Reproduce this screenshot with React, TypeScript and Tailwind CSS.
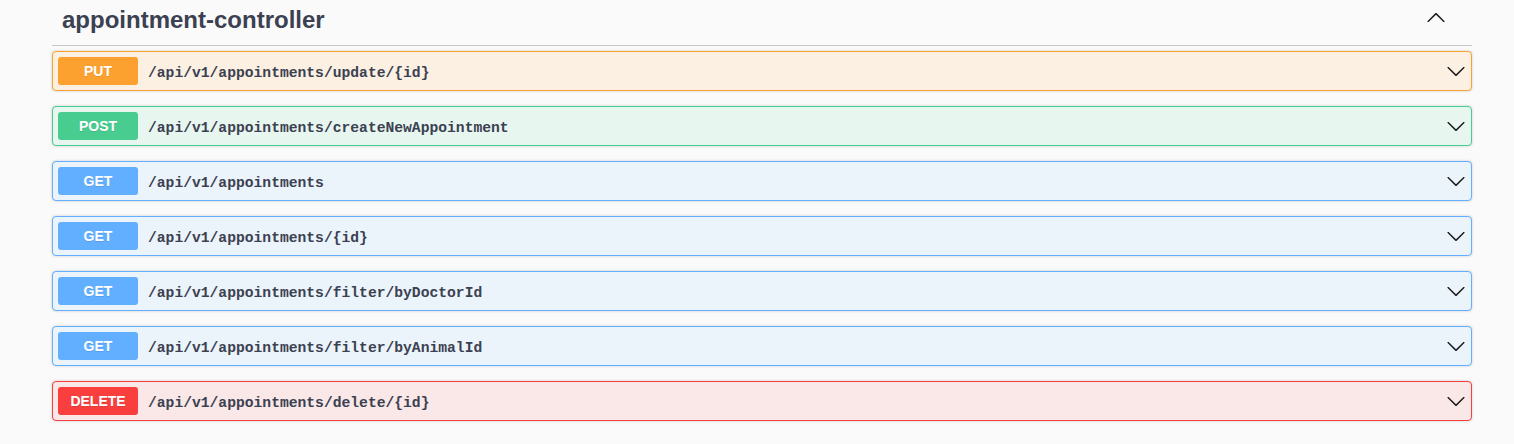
const methodStyles: Record<string, { row: string; badge: string }> = {
  PUT: { row: "bg-[#fcf0e3] border-[#fca130]", badge: "bg-[#fca130]" },
  POST: { row: "bg-[#e8f6f0] border-[#49cc90]", badge: "bg-[#49cc90]" },
  GET: { row: "bg-[#ebf3fb] border-[#61affe]", badge: "bg-[#61affe]" },
  DELETE: { row: "bg-[#fae7e7] border-[#f93e3e]", badge: "bg-[#f93e3e]" },
};

const endpoints = [
  { method: "PUT", path: "/api/v1/appointments/update/{id}" },
  { method: "POST", path: "/api/v1/appointments/createNewAppointment" },
  { method: "GET", path: "/api/v1/appointments" },
  { method: "GET", path: "/api/v1/appointments/{id}" },
  { method: "GET", path: "/api/v1/appointments/filter/byDoctorId" },
  { method: "GET", path: "/api/v1/appointments/filter/byAnimalId" },
  { method: "DELETE", path: "/api/v1/appointments/delete/{id}" },
];

function Chevron({ up = false }: { up?: boolean }) {
  return (
    <svg
      width="20"
      height="20"
      viewBox="0 0 20 20"
      className={up ? "rotate-180" : ""}
      fill="#1b1b1b"
    >
      <path d="M17.418 6.109c.272-.268.709-.268.979 0s.271.701 0 .969l-7.908 7.83c-.27.268-.707.268-.979 0l-7.908-7.83c-.27-.268-.27-.701 0-.969.271-.268.709-.268.979 0L10 13.25l7.418-7.141z" />
    </svg>
  );
}

export default function App() {
  return (
    <div className="min-h-screen w-full bg-[#fafafa] pl-[52px] pr-[42px] font-['Liberation_Sans',Arial,sans-serif]">
      <div className="flex h-[46px] items-start justify-between border-b border-[#c4c6cb] pl-[10px] pr-[26px]">
        <h4 className="pt-[6px] text-[24px] font-bold leading-[28px] text-[#3b4151]">
          appointment-controller
        </h4>
        <div className="pt-[8px]">
          <Chevron up />
        </div>
      </div>

      <div className="mt-[5px] flex flex-col gap-[15px]">
        {endpoints.map((ep, i) => (
          <div
            key={i}
            className={`flex h-[40px] items-center rounded-[4px] border px-[5px] shadow-[0_0_3px_rgba(0,0,0,0.19)] ${methodStyles[ep.method].row}`}
          >
            <span
              className={`flex h-[28px] w-[80px] items-center justify-center rounded-[3px] text-[14px] font-bold text-white [text-shadow:0_1px_0_rgba(0,0,0,0.1)] ${methodStyles[ep.method].badge}`}
            >
              {ep.method}
            </span>
            <span className="ml-[10px] flex-1 pt-[3px] font-['Liberation_Mono',monospace] text-[14.67px] font-bold text-[#3b4151]">
              {ep.path}
            </span>
            <Chevron />
          </div>
        ))}
      </div>
    </div>
  );
}
